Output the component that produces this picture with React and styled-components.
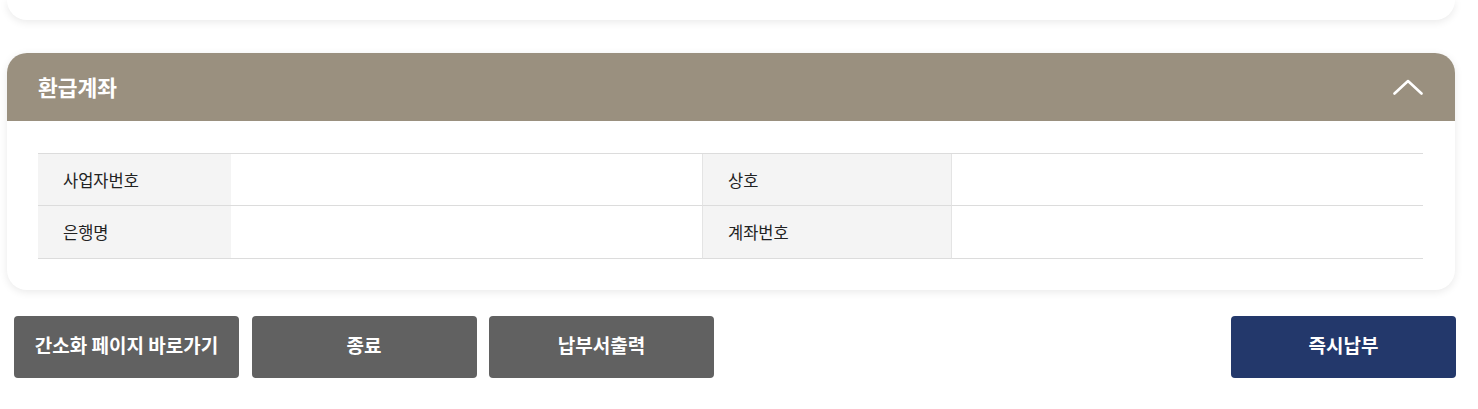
import React, { useState } from 'react'
import styled, { createGlobalStyle } from 'styled-components'

const GlobalStyle = createGlobalStyle`
  html, body {
    margin: 0;
    padding: 0;
    background: #fff;
    font-family: "Noto Sans CJK KR", "Noto Sans", sans-serif;
  }
`

const Page = styled.div`
  width: 1478px;
  padding: 0 23px 0 7px;
  box-sizing: border-box;
`

const PrevCard = styled.div`
  height: 20px;
  background: #fff;
  border-radius: 0 0 20px 20px;
  box-shadow: 0 2px 8px rgba(0, 0, 0, 0.09);
`

const Card = styled.section`
  margin-top: 33px;
  background: #fff;
  border-radius: 20px;
  box-shadow: 0 2px 8px rgba(0, 0, 0, 0.09);
  overflow: hidden;
`

const Header = styled.div`
  height: 68px;
  background: #9a907f;
  display: flex;
  align-items: center;
  justify-content: space-between;
  padding: 0 32px 0 31px;
`

const Title = styled.h2`
  margin: 0 0 2px;
  color: #fff;
  font-size: 21.5px;
  font-weight: 700;
  letter-spacing: 0;
`

const Toggle = styled.button`
  border: none;
  background: none;
  padding: 0;
  width: 30px;
  height: 16px;
  display: flex;
  cursor: pointer;
`

const Body = styled.div`
  padding: 32px 32px 31px 31px;
`

const Table = styled.div`
  display: grid;
  grid-template-columns: 193px 471px 250px 1fr;
  border-top: 1px solid #dcdcdc;
`

const Cell = styled.div`
  height: ${p => p.$h}px;
  box-sizing: border-box;
  display: flex;
  align-items: center;
  border-bottom: 1px solid #dcdcdc;
  font-size: 16.5px;
  color: #222;
  letter-spacing: 0;
  ${p => p.$label ? `
    background: #f4f4f4;
    padding-left: 25px;
  ` : `
    background: #fff;
  `}
  ${p => p.$divider && 'border-left: 1px solid #e4e4e4; border-right: 1px solid #e4e4e4;'}
`

const Actions = styled.div`
  display: flex;
  gap: 12.5px;
  margin: 26px 0 0 7px;
  width: 1442px;
`

const Button = styled.button`
  width: 225px;
  height: 62px;
  padding: 0 0 5px;
  border: none;
  border-radius: 4px;
  background: ${p => p.$primary ? '#23386b' : '#616161'};
  color: #fff;
  font-family: inherit;
  font-size: 19px;
  font-weight: 700;
  letter-spacing: 0;
  cursor: pointer;
  ${p => p.$primary && 'margin-left: auto;'}
`

const rows = [
  { left: '사업자번호', right: '상호', h: 52 },
  { left: '은행명', right: '계좌번호', h: 53 },
]

export default function App() {
  const [open, setOpen] = useState(true)

  return (
    <Page>
      <GlobalStyle />
      <PrevCard />
      <Card>
        <Header>
          <Title>환급계좌</Title>
          <Toggle onClick={() => setOpen(!open)} aria-label="접기">
            <svg width="30" height="16" viewBox="0 0 30 16">
              <polyline points="1.5,14.5 15,2 28.5,14.5" fill="none" stroke="#fff" strokeWidth="2.6" strokeLinecap="round" strokeLinejoin="round" />
            </svg>
          </Toggle>
        </Header>
        {open && (
          <Body>
            <Table>
              {rows.map(({ left, right, h }) => (
                <React.Fragment key={left}>
                  <Cell $label $h={h}>{left}</Cell>
                  <Cell $h={h} />
                  <Cell $label $divider $h={h}>{right}</Cell>
                  <Cell $h={h} />
                </React.Fragment>
              ))}
            </Table>
          </Body>
        )}
      </Card>
      <Actions>
        <Button>간소화 페이지 바로가기</Button>
        <Button>종료</Button>
        <Button>납부서출력</Button>
        <Button $primary>즉시납부</Button>
      </Actions>
    </Page>
  )
}
